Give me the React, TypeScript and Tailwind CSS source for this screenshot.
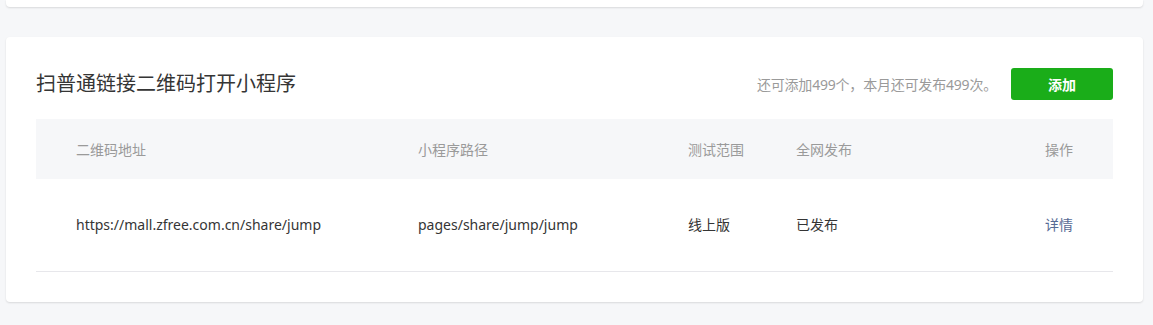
export default function App() {
  const font = { fontFamily: '"Noto Sans", "Noto Sans CJK SC", sans-serif' };
  return (
    <div
      className="min-h-[325px] bg-[#f6f7f9] pl-[6px] pr-[10px] text-[14px] text-[#353535]"
      style={font}
    >
      {/* 上方卡片（仅露出底部） */}
      <div className="h-[7px] rounded-b-[4px] bg-white shadow-[0_1px_2px_rgba(0,0,0,0.12)]" />

      <div className="mt-[30px] rounded-[4px] bg-white px-[30px] pt-[31px] pb-[30px] shadow-[0_1px_2px_rgba(0,0,0,0.12)]">
        <div className="flex h-[32px] items-center justify-between">
          <h3 className="text-[20px] font-normal leading-none text-[#353535]">扫普通链接二维码打开小程序</h3>
          <div className="flex items-center gap-[14px]">
            <span className="tracking-[-0.2px] text-[#9a9a9a]">还可添加499个，本月还可发布499次。</span>
            <button className="h-[32px] w-[102px] rounded-[3px] bg-[#1aad19] font-bold text-white">添加</button>
          </div>
        </div>

        <div className="mt-[19px]">
          <div className="grid h-[60px] grid-cols-[342px_270px_108px_249px_1fr] items-center bg-[#f6f7f9] text-[#9a9a9a]">
            <div className="pl-[40px]">二维码地址</div>
            <div className="pl-[40px]">小程序路径</div>
            <div className="pl-[40px]">测试范围</div>
            <div className="pl-[40px]">全网发布</div>
            <div className="pl-[40px]">操作</div>
          </div>
          <div className="grid h-[93px] grid-cols-[342px_270px_108px_249px_1fr] items-center border-b border-[#e7e7eb] pb-[1px]">
            <div className="pl-[40px]">https://mall.zfree.com.cn/share/jump</div>
            <div className="pl-[40px]">pages/share/jump/jump</div>
            <div className="pl-[40px]">线上版</div>
            <div className="pl-[40px]">已发布</div>
            <div className="pl-[40px]">
              <a href="#" className="text-[#576b95]">详情</a>
            </div>
          </div>
        </div>
      </div>
    </div>
  );
}
